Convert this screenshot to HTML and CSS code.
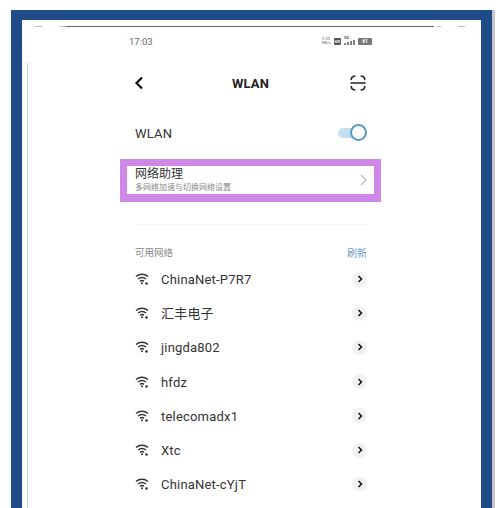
FILE: index.html
```html
<!DOCTYPE html>
<html lang="en">
<head>
  <meta charset="UTF-8">
  <title>WLAN</title>
  <link rel="stylesheet" href="styles.css">
</head>
<body>
  <div class="frame">
    <div class="top-edge">
      <span class="tick tick-a"></span>
      <span class="tick tick-b"></span>
      <span class="top-line"></span>
      <span class="tick tick-c"></span>
      <span class="tick tick-d"></span>
    </div>
    <div class="phone">
      <div class="status-bar">
        <span class="time">17:03</span>
        <div class="status-icons">
          <span class="speed">0.30<br>KB/s</span>
          <span class="hd">HD</span>
          <span class="signal">
            <span class="signal-label">5G</span>
            <svg width="11" height="5" viewBox="0 0 11 5"><path d="M1 3v2M4 2v3M7 1v4M10 0v5" stroke="#555" stroke-width="1.500"/></svg>
          </span>
          <span class="battery">61</span>
        </div>
      </div>

      <div class="title-bar">
        <svg class="back-icon" width="10" height="14" viewBox="0 0 10 14"><path d="M8 1.500 2.500 7 8 12.500" fill="none" stroke="#111" stroke-width="2.200"/></svg>
        <h1>WLAN</h1>
        <svg class="scan-icon" width="16" height="16" viewBox="0 0 16 16" fill="none" stroke="#222" stroke-width="1.600" stroke-linecap="round">
          <path d="M1.200 4.500C1.400 2.500 2.500 1.300 4.800 1M11.200 1c2.300.3 3.400 1.500 3.600 3.500M1.200 11.500c.2 2 1.300 3.200 3.600 3.500M11.200 15c2.300-.3 3.400-1.500 3.600-3.500M1 8h14"/>
        </svg>
      </div>

      <div class="wlan-row">
        <span>WLAN</span>
        <div class="toggle"><div class="toggle-knob"></div></div>
      </div>

      <div class="assistant">
        <div class="assistant-inner">
          <div>
            <div class="assistant-title">网络助理</div>
            <div class="assistant-sub">多网络加速与切换网络设置</div>
          </div>
          <svg width="7" height="12" viewBox="0 0 7 12"><path d="M1 1l5 5-5 5" fill="none" stroke="#bbb" stroke-width="1.200"/></svg>
        </div>
      </div>

      <div class="divider"></div>

      <div class="section-head">
        <span>可用网络</span>
        <span class="refresh">刷新</span>
      </div>

      <div class="network-list" id="networks"></div>
    </div>
  </div>
  <script>
    const names = ['ChinaNet-P7R7', '汇丰电子', 'jingda802', 'hfdz', 'telecomadx1', 'Xtc', 'ChinaNet-cYjT'];
    const wifi = '<svg class="wifi" width="14" height="12" viewBox="0 0 14 12" fill="none" stroke="#333" stroke-width="1.500">' +
      '<path d="M1 3.500C4.500.5 9.500.5 13 3.500M3 6c2.500-2 5.500-2 8 0M5 8.300c1.300-.9 2.700-.9 4 0"/>' +
      '<circle cx="7" cy="10.300" r="1" fill="#333" stroke="none"/><circle cx="11.500" cy="10.500" r="1.300" fill="#333" stroke="none"/></svg>';
    const chevron = '<span class="arrow"><svg width="6" height="8" viewBox="0 0 6 8"><path d="M1.500 1l3 3-3 3" fill="none" stroke="#111" stroke-width="1.500"/></svg></span>';

    document.getElementById('networks').innerHTML = names.map(function(name) {
      return '<div class="network">' + wifi + '<span class="network-name">' + name + '</span>' + chevron + '</div>';
    }).join('');
  </script>
</body>
</html>
```

FILE: styles.css
```css
html, body {
  height: 100%;
}

body {
  margin: 0;
  height: 508px;
  overflow: hidden;
  background-color: #fff;
  font-family: "Roboto", "Noto Sans CJK SC", sans-serif;
  color: #333;
}

.frame {
  box-sizing: border-box;
  margin: 10px 8px 0 11px;
  height: 498px;
  padding-top: 6px;
  /* faint scan edge down the left side */
  background: #fff linear-gradient(#c8d2e0, #c8d2e0) 5px 43px / 1px 100% no-repeat;
  border: solid #1f4c86;
  border-width: 10px 11px 0 11px;
  box-shadow: 3px 0 0 #c4c6c9;
  overflow: hidden;
}

.top-edge {
  display: flex;
  align-items: center;
  height: 1px;
  padding-left: 13px;
}

.tick {
  height: 1px;
  background-color: #b8bec6;
}

.tick-a {
  width: 7px;
  margin-right: 18px;
}

.tick-b {
  width: 6px;
}

.top-line {
  width: 368px;
  height: 1px;
  background-color: #5b6675;
}

.tick-c {
  width: 4px;
  margin-left: 3px;
}

.tick-d {
  width: 7px;
  margin-left: 17px;
}

.phone {
  box-sizing: border-box;
  width: 232px;
  margin-left: 113px;
}

.status-bar {
  display: flex;
  justify-content: space-between;
  align-items: center;
  height: 14px;
  margin: 7px -5px 0 -6px;
}

.time {
  font-size: 9.500px;
  color: #666;
}

.status-icons {
  display: flex;
  align-items: center;
  gap: 3px;
}

.speed {
  font-size: 4px;
  line-height: 4px;
  color: #666;
  text-align: center;
}

.hd {
  padding: 1px;
  font-size: 4px;
  line-height: 5px;
  font-weight: bold;
  color: #fff;
  background-color: #555;
  border-radius: 1px;
}

.signal {
  position: relative;
  display: flex;
  align-items: flex-end;
  height: 8px;
}

.signal-label {
  position: absolute;
  top: -2px;
  left: 0;
  font-size: 4px;
  line-height: 5px;
  font-weight: bold;
  color: #555;
}

.battery {
  width: 14px;
  font-size: 5px;
  line-height: 7px;
  font-weight: bold;
  text-align: center;
  color: #fff;
  background-color: #777;
  border-radius: 1px;
}

.title-bar {
  display: flex;
  justify-content: space-between;
  align-items: center;
  height: 16px;
  margin-top: 27px;
}

.title-bar h1 {
  margin: 0 0 0 7px;
  font-size: 13px;
  font-weight: bold;
  letter-spacing: .1px;
  color: #222;
}

.back-icon {
  margin-left: -1px;
}

.scan-icon {
  margin-right: 1px;
}

.wlan-row {
  display: flex;
  justify-content: space-between;
  align-items: center;
  height: 18px;
  margin-top: 33px;
  font-size: 13px;
  letter-spacing: .2px;
}

.toggle {
  position: relative;
  width: 29px;
  height: 10px;
  background-color: #c6deee;
  border-radius: 5px;
}

.toggle-knob {
  position: absolute;
  top: -4px;
  right: 0;
  box-sizing: border-box;
  width: 17px;
  height: 17px;
  background-color: #fff;
  border: 2px solid #5c9ac6;
  border-radius: 50%;
}

.assistant {
  box-sizing: border-box;
  height: 43px;
  margin: 17px -14px 0 -15px;
  padding: 7px;
  background-color: #cf88e8;
}

.assistant-inner {
  display: flex;
  justify-content: space-between;
  align-items: center;
  height: 28px;
  padding: 0 7px 0 8px;
  background-color: #fff;
}

.assistant-title {
  font-size: 12px;
  line-height: 15px;
  color: #333;
}

.assistant-sub {
  font-size: 8px;
  line-height: 12px;
  color: #888;
}

.divider {
  height: 1px;
  margin-top: 22px;
  background-color: #f5f5f5;
}

.section-head {
  display: flex;
  justify-content: space-between;
  align-items: center;
  height: 14px;
  margin-top: 20px;
  font-size: 9.500px;
  color: #888;
}

.refresh {
  font-size: 10px;
  color: #6d9cc0;
}

.network-list {
  margin-top: 3px;
}

.network {
  display: flex;
  align-items: center;
  height: 34.200px;
}

.wifi {
  flex-shrink: 0;
}

.network-name {
  flex: 1;
  margin-left: 12px;
  padding-top: 2px;
  font-size: 13px;
  line-height: 16px;
  letter-spacing: .2px;
  color: #333;
}

.arrow {
  display: flex;
  justify-content: center;
  align-items: center;
  width: 15px;
  height: 15px;
  background-color: #f1f1f1;
  border-radius: 50%;
}
```
